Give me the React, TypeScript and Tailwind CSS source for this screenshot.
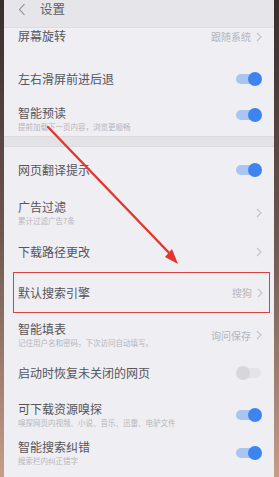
import React from "react";

const font = { fontFamily: '"Noto Sans CJK SC", "Noto Sans", sans-serif' };

function Toggle({ on = true }: { on?: boolean }) {
  return on ? (
    <div className="relative w-[26px] h-[14px] flex items-center">
      <div className="w-[22px] h-[10px] rounded-full bg-[#aac5f3]" />
      <div className="absolute right-0 top-0 w-[14px] h-[14px] rounded-full bg-[#3e84ef]" />
    </div>
  ) : (
    <div className="relative w-[26px] h-[14px] flex items-center">
      <div className="ml-[3px] w-[22px] h-[10px] rounded-full bg-[#e4e4e8]" />
      <div className="absolute left-0 top-0 w-[14px] h-[14px] rounded-full bg-[#d7d7db]" />
    </div>
  );
}

function Chevron() {
  return (
    <svg width="6" height="10" viewBox="0 0 6 10" className="ml-[5px]">
      <path d="M1 1 L5 5 L1 9" fill="none" stroke="#c4c4c8" strokeWidth="1.1" />
    </svg>
  );
}

function Row({
  h,
  title,
  sub,
  right,
}: {
  h: string;
  title: string;
  sub?: string;
  right?: React.ReactNode;
}) {
  return (
    <div className={`flex items-center justify-between pl-[14px] pr-[12px] ${h}`}>
      <div className="flex flex-col">
        <div className="text-[12px] leading-[14px] text-[#55555a]">{title}</div>
        {sub && <div className="mt-[2px] text-[7.5px] leading-[10px] text-[#b6b6bc]">{sub}</div>}
      </div>
      {right}
    </div>
  );
}

function Value({ text }: { text: string }) {
  return (
    <div className="flex items-center">
      <span className="text-[10px] text-[#b5b5ba]">{text}</span>
      <Chevron />
    </div>
  );
}

export default function App() {
  return (
    <div className="w-[279px] h-[477px] flex bg-gradient-to-b from-[#3a2d2a] via-[#6e5850] to-[#c79d88] overflow-hidden" style={font}>
      <div className="w-[4px]" />
      <div className="relative flex-1 bg-[#efeef3] flex flex-col">
        <div className="h-[28px] bg-[#e6e5ea] flex items-start pt-[2px] pl-[14px] border-b border-[#dedde2]">
          <svg width="8" height="13" viewBox="0 0 8 13" className="mt-[1px]">
            <path d="M6.5 1 L1.5 6.5 L6.5 12" fill="none" stroke="#8a8a90" strokeWidth="1.1" />
          </svg>
          <span className="ml-[14px] text-[12.5px] leading-[14px] text-[#5e5e63]">设置</span>
        </div>
        <div className="h-[30px] flex items-start justify-between pt-[1px] pl-[14px] pr-[12px]">
          <div className="text-[12px] leading-[14px] text-[#55555a]">屏幕旋转</div>
          <Value text="跟随系统" />
        </div>
        <Row h="h-[41px]" title="左右滑屏前进后退" right={<Toggle />} />
        <div className="h-[37px] flex items-start justify-between pt-[7px] pl-[14px] pr-[12px]">
          <div className="flex flex-col">
            <div className="text-[12px] leading-[14px] text-[#55555a]">智能预读</div>
            <div className="mt-[2px] text-[7.5px] leading-[10px] text-[#b6b6bc]">提前加载下一页内容，浏览更顺畅</div>
          </div>
          <div className="mt-[2px]">
            <Toggle />
          </div>
        </div>
        <div className="h-[11px] bg-[#e3e2e7] border-y border-[#dcdbe0]" />
        <Row h="h-[46px]" title="网页翻译提示" right={<Toggle />} />
        <Row h="h-[39px]" title="广告过滤" sub="累计过滤广告7条" right={<Chevron />} />
        <Row h="h-[40px]" title="下载路径更改" right={<Chevron />} />
        <div className="h-[41px] ml-[9px] mr-[4px] border-[1.5px] border-[#d8423c] flex items-center justify-between pl-[4px] pr-[6px]">
          <div className="text-[12px] leading-[14px] text-[#55555a]">默认搜索引擎</div>
          <Value text="搜狗" />
        </div>
        <Row h="h-[44px]" title="智能填表" sub="记住用户名和密码，下次访问自动填写。" right={<Value text="询问保存" />} />
        <Row h="h-[32px]" title="启动时恢复未关闭的网页" right={<Toggle on={false} />} />
        <Row h="h-[52px]" title="可下载资源嗅探" sub="嗅探网页内视频、小说、音乐、迅雷、电驴文件" right={<Toggle />} />
        <Row h="h-[24px]" title="智能搜索纠错" sub="搜索栏内纠正错字" right={<Toggle />} />
        <svg className="absolute left-0 top-0 pointer-events-none" width="270" height="477" viewBox="0 0 270 477">
          <line x1="44" y1="127" x2="170" y2="258" stroke="#e2372f" strokeWidth="2.4" strokeLinecap="round" />
          <polygon points="174,264 161,257 168,249" fill="#e2372f" />
        </svg>
      </div>
      <div className="w-[5px]" />
    </div>
  );
}
